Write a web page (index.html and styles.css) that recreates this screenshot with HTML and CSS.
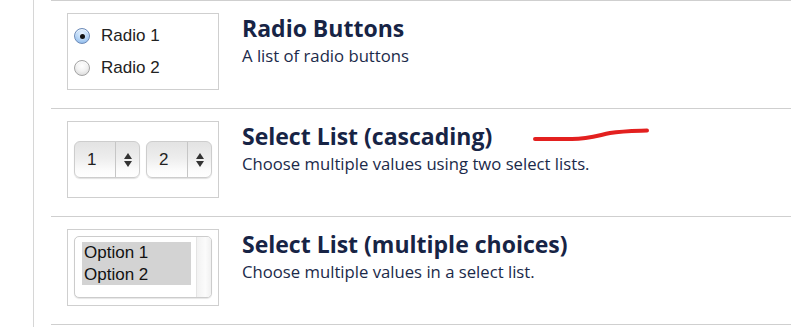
FILE: index.html
```html
<!DOCTYPE html>
<html>
<head>
<meta charset="utf-8">
<link rel="stylesheet" href="styles.css">
</head>
<body>
<div class="page">
  <div class="gutter"></div>
  <div class="list">
    <div class="item">
      <div class="preview preview-radio">
        <div class="radio-row"><span class="radio checked"></span><span class="radio-label">Radio 1</span></div>
        <div class="radio-row"><span class="radio"></span><span class="radio-label">Radio 2</span></div>
      </div>
      <div class="info">
        <div class="title">Radio Buttons</div>
        <div class="desc">A list of radio buttons</div>
      </div>
    </div>
    <div class="item">
      <div class="preview preview-select">
        <div class="select"><span class="select-value">1</span><span class="select-arrows"><span class="arr-up"></span><span class="arr-down"></span></span></div>
        <div class="select"><span class="select-value">2</span><span class="select-arrows"><span class="arr-up"></span><span class="arr-down"></span></span></div>
      </div>
      <div class="info">
        <div class="title">Select List (cascading)</div>
        <div class="desc">Choose multiple values using two select lists.</div>
      </div>
    </div>
    <div class="item">
      <div class="preview preview-multi">
        <div class="multi">
          <div class="multi-options">
            <div class="opt">Option 1</div>
            <div class="opt">Option 2</div>
          </div>
          <div class="multi-scroll"></div>
        </div>
      </div>
      <div class="info">
        <div class="title">Select List (multiple choices)</div>
        <div class="desc">Choose multiple values in a select list.</div>
      </div>
    </div>
    <div class="item item-end"></div>
  </div>
  <svg class="scribble" width="130" height="24" viewBox="0 0 130 24">
    <path d="M5 17 L42 17 C58 17 66 14 80 11 C92 9 100 9 117 8.5" fill="none" stroke="#e3201f" stroke-width="4" stroke-linecap="round"/>
  </svg>
</div>
</body>
</html>
```
FILE: styles.css
```css
html, body {
  margin: 0;
  padding: 0;
  background: #fff;
}
.page {
  position: relative;
  display: flex;
  width: 791px;
  height: 327px;
  overflow: hidden;
}
.gutter {
  width: 33px;
  flex: none;
  border-right: 1px solid #d6d6d6;
}
.list {
  flex: 1;
  margin-left: 17px;
  display: flex;
  flex-direction: column;
}
.item {
  display: flex;
  height: 95px;
  flex: none;
  border-top: 1px solid #cfcfcf;
  padding: 12px 0 0 16px;
  box-sizing: content-box;
}
.item-end {
  height: 10px;
}
.preview {
  width: 150px;
  height: 75px;
  border: 1px solid #cfcfcf;
  flex: none;
  box-sizing: content-box;
}
.info {
  margin-left: 23px;
  margin-top: 1px;
  color: #1b2a4a;
  font-family: "Open Sans", sans-serif;
}
.title {
  font-weight: 700;
  font-size: 23px;
  line-height: 28px;
  color: #172445;
}
.desc {
  margin-top: 3px;
  font-size: 16.7px;
  line-height: 22px;
}
/* radio */
.preview-radio {
  padding-top: 6px;
  height: 69px;
}
.radio-row {
  display: flex;
  align-items: center;
  height: 32px;
  padding-left: 6px;
}
.radio {
  width: 14px;
  height: 14px;
  border-radius: 50%;
  border: 1px solid #a3a3a3;
  background: radial-gradient(circle at 50% 35%, #ffffff 0%, #f2f2f2 45%, #d2d2d2 100%);
  position: relative;
  flex: none;
  box-shadow: inset 0 1px 1px rgba(255,255,255,0.8);
}
.radio.checked {
  border-color: #6d8bb8;
  background: radial-gradient(circle at 50% 30%, #e8f3ff 0%, #b8d6f6 50%, #7fb1e8 100%);
}
.radio.checked::after {
  content: "";
  position: absolute;
  left: 4.5px;
  top: 4.5px;
  width: 5px;
  height: 5px;
  border-radius: 50%;
  background: #111;
}
.radio-label {
  margin-left: 11px;
  font-family: "Liberation Sans", Arial, sans-serif;
  font-size: 17px;
  color: #222;
}
/* cascading selects */
.preview-select {
  display: flex;
  align-items: center;
  gap: 6px;
  padding-left: 6px;
  width: 144px;
}
.select {
  width: 64px;
  height: 35px;
  border: 1px solid #cdcdcd;
  border-radius: 6px;
  background: linear-gradient(#e3e3e3 0%, #ededed 45%, #fbfbfb 80%, #ffffff 100%);
  box-shadow: 0 1px 1px rgba(0,0,0,0.12);
  display: flex;
  font-family: "Liberation Sans", Arial, sans-serif;
  font-size: 17px;
  color: #222;
}
.select-value {
  width: 41px;
  display: flex;
  align-items: center;
  padding-left: 12px;
  box-sizing: border-box;
  border-right: 1px solid #c6c6c6;
}
.select-arrows {
  flex: 1;
  display: flex;
  flex-direction: column;
  align-items: center;
  justify-content: center;
  gap: 2px;
}
.arr-up {
  width: 0;
  height: 0;
  border-left: 4px solid transparent;
  border-right: 4px solid transparent;
  border-bottom: 6px solid #333;
}
.arr-down {
  width: 0;
  height: 0;
  border-left: 4px solid transparent;
  border-right: 4px solid transparent;
  border-top: 6px solid #333;
}
/* multi select */
.preview-multi {
  padding: 6px 0 0 6px;
  width: 144px;
  height: 69px;
}
.multi {
  width: 136px;
  height: 60px;
  border: 1px solid #cccccc;
  border-radius: 5px;
  display: flex;
  background: #fff;
  box-shadow: 0 1px 1px rgba(0,0,0,0.1);
  overflow: hidden;
}
.multi-options {
  flex: 1;
  padding: 5px 0 0 7px;
}
.opt {
  width: 109px;
  height: 21.5px;
  line-height: 21px;
  background: #d3d3d3;
  font-family: "Liberation Sans", Arial, sans-serif;
  font-size: 17px;
  color: #111;
  padding-left: 2px;
  box-sizing: border-box;
}
.multi-scroll {
  width: 14px;
  border-left: 1px solid #e4e4e4;
  background: linear-gradient(90deg, #f2f2f2, #fbfbfb 60%, #f0f0f0);
}
.scribble {
  position: absolute;
  left: 530px;
  top: 122px;
}
```
